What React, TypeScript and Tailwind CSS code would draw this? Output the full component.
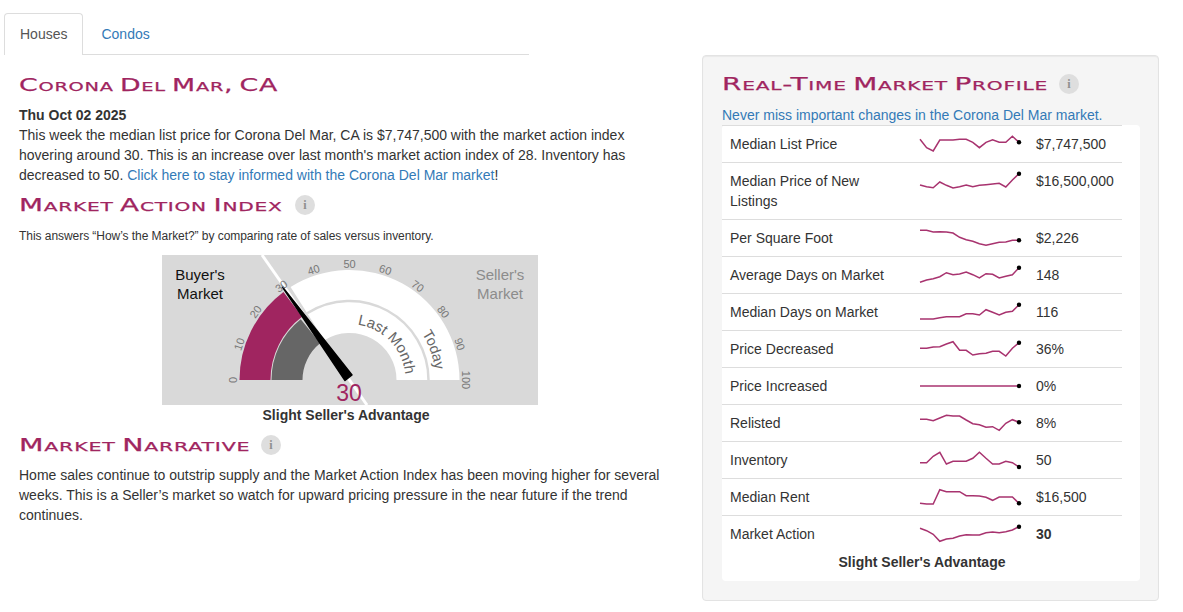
import React from 'react';

const rows: Array<{ name: string; value: string; bold?: boolean; line: number[] }> = [
  { name: 'Median List Price', value: '$7,747,500', line: [14.3, 22.7, 26, 15, 15, 15, 14.3, 14.3, 17.3, 22.7, 17.3, 14.7, 17.3, 17.3, 11.3, 17.3] },
  { name: 'Median Price of New Listings', value: '$16,500,000', line: [23, 24.7, 25.7, 20, 23.3, 26, 24.7, 23, 24.7, 23.3, 22.7, 22, 21.3, 25, 18, 11.7] },
  { name: 'Per Square Foot', value: '$2,226', line: [11.3, 11.3, 13, 12.7, 13, 14, 18.3, 20.7, 22.3, 24.7, 26.3, 24.7, 23.3, 23, 21.3, 21.3] },
  { name: 'Average Days on Market', value: '148', line: [26.3, 24, 22.7, 20.7, 16.7, 18.7, 18, 16, 18.7, 22, 17.7, 18.3, 22, 20.3, 18.7, 11.7] },
  { name: 'Median Days on Market', value: '116', line: [26, 26, 26, 24.7, 23.7, 23.7, 23.7, 20.7, 20.7, 22, 16.7, 19.3, 22, 19.3, 18.3, 11.7] },
  { name: 'Price Decreased', value: '36%', line: [18.3, 18.3, 17, 16.7, 14, 11.7, 20.3, 20.3, 25, 23.7, 23.3, 21.3, 21.3, 26, 18.3, 12.7] },
  { name: 'Price Increased', value: '0%', line: [19, 19, 19, 19, 19, 19, 19, 19, 19, 19, 19, 19, 19, 19, 19, 19] },
  { name: 'Relisted', value: '8%', line: [15.3, 15.3, 16.7, 14, 11.3, 12, 12, 16, 19.7, 20.7, 23.3, 22.7, 26.3, 19.3, 15.7, 18.3] },
  { name: 'Inventory', value: '50', line: [21.7, 21.7, 15.3, 11.3, 23, 20.3, 20.3, 20.3, 17.3, 11.3, 17.3, 23, 23, 20.3, 21.7, 26] },
  { name: 'Median Rent', value: '$16,500', line: [25.3, 26, 26, 11.7, 13.7, 13.7, 13.7, 17.7, 17.7, 18, 19.3, 22.3, 19, 19, 19, 25.3] },
  { name: 'Market Action', value: '30', bold: true, line: [13.3, 15.7, 19.3, 26.3, 24, 23.3, 21, 19.7, 20, 20, 17.7, 17, 17.7, 16.7, 15, 11.7] },
];

const ticks = [0, 10, 20, 30, 40, 50, 60, 70, 80, 90, 100];

// gauge centre inside the 376x150 picture
const CX = 187.5;
const CY = 125;

const polar = (r: number, v: number): [number, number] => {
  const a = (Math.PI * v) / 100;
  return [CX - r * Math.cos(a), CY - r * Math.sin(a)];
};

const band = (inner: number, outer: number, from: number, to: number): string => {
  const [ax, ay] = polar(outer, from);
  const [bx, by] = polar(outer, to);
  const [cx, cy] = polar(inner, to);
  const [dx, dy] = polar(inner, from);
  return `M${ax} ${ay}A${outer} ${outer} 0 0 1 ${bx} ${by}L${cx} ${cy}A${inner} ${inner} 0 0 0 ${dx} ${dy}Z`;
};

const arc = (r: number, from: number, to: number): string => {
  const [ax, ay] = polar(r, from);
  const [bx, by] = polar(r, to);
  return `M${ax} ${ay}A${r} ${r} 0 0 1 ${bx} ${by}`;
};

const Info = () => (
  <span className="flex h-5 w-5 shrink-0 items-center justify-center rounded-full bg-[#dedede] font-['Liberation_Serif',serif] text-[12px] font-bold leading-none text-[#8f8f8f]">
    i
  </span>
);

// the installed fonts have no wide copperplate face, so the small caps get stretched
const Heading = ({ children, boxClass, info = true }: { children: string; boxClass: string; info?: boolean }) => (
  <h2 className="flex h-[26px] items-center gap-[12px]">
    <span className={`block shrink-0 whitespace-nowrap ${boxClass}`}>
      <span className="inline-block origin-left font-['DejaVu_Sans',sans-serif] text-[18px] font-normal leading-[26px] tracking-[0.5px] text-[#a02560] [-webkit-text-stroke:0.25px_#a02560] [font-variant:small-caps] [word-spacing:-2px] [.h-corona_&]:scale-x-[1.487] [.h-action_&]:scale-x-[1.547] [.h-narrative_&]:scale-x-[1.578] [.h-profile_&]:scale-x-[1.549]">
        {children}
      </span>
    </span>
    {info && <Info />}
  </h2>
);

const Spark = ({ line }: { line: number[] }) => {
  const points = line.map((y, i) => `${2 + i * 6.6} ${y - 1}`).join(' ');
  return (
    <svg width="104" height="36" className="block">
      <polyline points={points} fill="none" stroke="#a8336f" strokeWidth="1.5" />
      <circle cx={2 + 15 * 6.6} cy={line[15] - 1} r="2.2" fill="#000" />
    </svg>
  );
};

const Gauge = () => (
  <svg width="376" height="150" className="block bg-[#d9d9d9]">
    <path d={band(47, 110, 32, 100)} fill="#fff" />
    <path d={arc(79, 32, 100)} fill="none" stroke="#d9d9d9" strokeWidth="2.5" />
    <path d={band(79, 110, 0, 29.5)} fill="#a02560" />
    <path d={band(47, 78, 0, 28.5)} fill="#666" />
    <line x1="100" y1="0" x2="205" y2="150" stroke="#fff" strokeWidth="3" />
    <polygon points="120.5,32 190,120 183,125.5" fill="#000" stroke="#000" strokeWidth="1.5" strokeLinejoin="round" />
    {ticks.map((v) => {
      const [x, y] = polar(115, v);
      return (
        <text
          key={v}
          x={x}
          y={y}
          transform={`rotate(${-90 + 1.8 * v} ${x} ${y})`}
          textAnchor="middle"
          dominantBaseline="middle"
          fontSize="11"
          fill="#777"
          className="font-['Liberation_Sans',sans-serif]"
        >
          {v}
        </text>
      );
    })}
    <defs>
      <path id="lastMonthArc" d={arc(56, 50, 100)} />
      <path id="todayArc" d={arc(86, 80, 100)} />
    </defs>
    <text fontSize="15" fill="#666" className="font-['Liberation_Sans',sans-serif]">
      <textPath href="#lastMonthArc" startOffset="8">Last Month</textPath>
    </text>
    <text fontSize="14.5" fill="#666" className="font-['Liberation_Sans',sans-serif]">
      <textPath href="#todayArc" startOffset="5">Today</textPath>
    </text>
    <g fontSize="15" textAnchor="middle" className="font-['Liberation_Sans',sans-serif]">
      <text x="38" y="25" fill="#111">Buyer's</text>
      <text x="38" y="44" fill="#111">Market</text>
      <text x="338" y="25" fill="#8c8c8c">Seller's</text>
      <text x="338" y="44" fill="#8c8c8c">Market</text>
    </g>
    <text x="187" y="146" textAnchor="middle" fontSize="23" fill="#a02560" className="font-['Liberation_Sans',sans-serif]">
      30
    </text>
  </svg>
);

const App = (): React.ReactElement => {
  return (
    <div className="flex h-[612px] w-[1183px] overflow-hidden bg-white pt-[13px] font-['Liberation_Sans',Arial,sans-serif] text-[14px] leading-5 text-[#333]">
      <div className="ml-[4px] w-[677px] shrink-0">
        <div className="flex h-[42px] w-[525px] border-b border-[#ddd]">
          <div className="h-[42px] rounded-t border border-b-0 border-[#ddd] bg-white px-[15px] py-[10px] text-[#555]">
            Houses
          </div>
          <a className="ml-[2px] h-[41px] border border-transparent px-[15px] py-[10px] text-[#337ab7]">Condos</a>
        </div>
        <div className="pl-[15px]">
          <div className="mt-[17px]">
            <Heading boxClass="h-corona w-[258px]" info={false}>Corona Del Mar, CA</Heading>
          </div>
          <p className="mt-[7px]">
            <b>Thu Oct 02 2025</b>
            <br />
            This week the median list price for Corona Del Mar, CA is $7,747,500 with the market action index hovering
            around 30. This is an increase over last month's market action index of 28. Inventory has decreased to 50.{' '}
            <a className="text-[#337ab7]">Click here to stay informed with the Corona Del Mar market</a>!
          </p>
          <div className="mt-[7px]">
            <Heading boxClass="h-action w-[264px]">Market Action Index</Heading>
          </div>
          <p className="mt-[10px] text-[12px] leading-[17px] tracking-[-0.05px]">This answers “How’s the Market?” by comparing rate of sales versus inventory.</p>
          <div className="mt-[10px] flex justify-center">
            <Gauge />
          </div>
          <div className="pr-2 text-center font-bold">Slight Seller's Advantage</div>
          <div className="mt-[7px]">
            <Heading boxClass="h-narrative w-[230px]">Market Narrative</Heading>
          </div>
          <p className="mt-[7px]">
            Home sales continue to outstrip supply and the Market Action Index has been moving higher for several weeks.
            This is a Seller’s market so watch for upward pricing pressure in the near future if the trend continues.
          </p>
        </div>
      </div>

      <div className="ml-[21px] mt-[42px] h-[546px] w-[457px] shrink-0 rounded border border-[#e3e3e3] bg-[#f5f5f5] pl-[19px] pr-[18px] pt-[15px] shadow-[inset_0_1px_1px_rgba(0,0,0,0.05)]">
        <Heading boxClass="h-profile w-[325px]">Real-Time Market Profile</Heading>
        <a className="mt-[8px] block text-[#337ab7]">Never miss important changes in the Corona Del Mar market.</a>
        <div className="h-[456px] rounded bg-white">
          <table className="w-[400px] table-fixed border-collapse">
            <colgroup>
              <col className="w-[196px]" />
              <col className="w-[118px]" />
              <col />
            </colgroup>
            <tbody>
              {rows.map((r) => (
                <tr key={r.name} className="border-t border-[#ddd] align-top">
                  <td className="py-2 pl-2 pr-2">{r.name}</td>
                  <td className="p-0">
                    <Spark line={r.line} />
                  </td>
                  <td className={`py-2 pl-0 ${r.bold ? 'font-bold' : ''}`}>{r.value}</td>
                </tr>
              ))}
            </tbody>
          </table>
          <div className="w-[400px] text-center font-bold">Slight Seller's Advantage</div>
        </div>
      </div>
    </div>
  );
};

export default App;
